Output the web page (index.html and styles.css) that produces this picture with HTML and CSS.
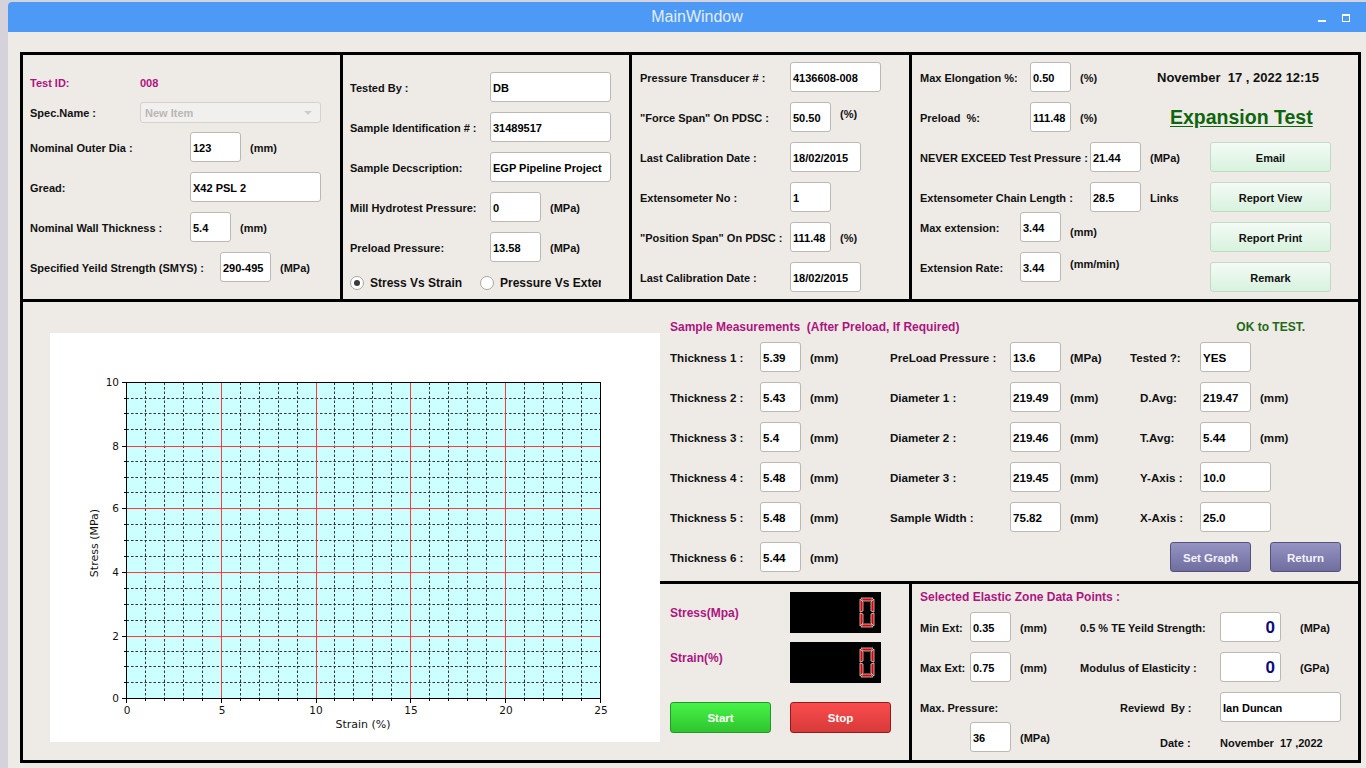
FILE: index.html
```html
<!DOCTYPE html>
<html>
<head>
<meta charset="utf-8">
<title>MainWindow</title>
<link rel="stylesheet" href="styles.css">
</head>
<body>
<div class="window">
  <div class="titlebar">
    <span class="title">MainWindow</span>
    <div class="wctl"><span class="wmin"></span><span class="wmax"></span></div>
  </div>
  <div class="content">
    <div class="frame">
      <div class="toprow">
        <!-- Panel 1 -->
        <div class="panel p1">
          <div class="form">
            <div class="row h20"><span class="lbl mag lw110">Test ID:</span><span class="lbl mag">008</span></div>
            <div class="row h20"><span class="lbl lw110">Spec.Name :</span><div class="combo"><span>New Item</span><i class="arrow"></i></div></div>
            <div class="row"><span class="lbl lw160">Nominal Outer Dia :</span><div class="inp w51">123</div><span class="unit">(mm)</span></div>
            <div class="row"><span class="lbl lw160">Gread:</span><div class="inp w131">X42 PSL 2</div></div>
            <div class="row"><span class="lbl lw160">Nominal Wall Thickness :</span><div class="inp w41">5.4</div><span class="unit">(mm)</span></div>
            <div class="row"><span class="lbl lw190">Specified Yeild Strength (SMYS) :</span><div class="inp w51">290-495</div><span class="unit">(MPa)</span></div>
          </div>
        </div>
        <!-- Panel 2 -->
        <div class="panel p2">
          <div class="form">
            <div class="row"><span class="lbl lw140">Tested By :</span><div class="inp w121">DB</div></div>
            <div class="row"><span class="lbl lw140">Sample Identification # :</span><div class="inp w121">31489517</div></div>
            <div class="row"><span class="lbl lw140">Sample Decscription:</span><div class="inp w121">EGP Pipeline Project</div></div>
            <div class="row"><span class="lbl lw140">Mill Hydrotest Pressure:</span><div class="inp w51">0</div><span class="unit">(MPa)</span></div>
            <div class="row"><span class="lbl lw140">Preload Pressure:</span><div class="inp w51">13.58</div><span class="unit">(MPa)</span></div>
            <div class="row h22">
              <div class="rgroup"><span class="radio on"></span><span class="rtxt">Stress Vs Strain</span></div>
              <div class="rgroup"><span class="radio"></span><span class="rtxt clip">Pressure Vs Extensometer</span></div>
            </div>
          </div>
        </div>
        <!-- Panel 3 -->
        <div class="panel p3">
          <div class="form">
            <div class="row"><span class="lbl lw150">Pressure Transducer # :</span><div class="inp w91">4136608-008</div></div>
            <div class="row"><span class="lbl lw150">"Force Span" On PDSC :</span><div class="inp w41">50.50</div><span class="unit up">(%)</span></div>
            <div class="row"><span class="lbl lw150">Last Calibration Date :</span><div class="inp w71">18/02/2015</div></div>
            <div class="row"><span class="lbl lw150">Extensometer No :</span><div class="inp w41">1</div></div>
            <div class="row"><span class="lbl lw150">"Position Span" On PDSC :</span><div class="inp w41">111.48</div><span class="unit">(%)</span></div>
            <div class="row"><span class="lbl lw150">Last Calibration Date :</span><div class="inp w71">18/02/2015</div></div>
          </div>
        </div>
        <!-- Panel 4 -->
        <div class="panel p4">
          <div class="p4top">
            <div class="form p4l1">
              <div class="row"><span class="lbl lw110">Max Elongation %:</span><div class="inp w41">0.50</div><span class="unit">(%)</span></div>
              <div class="row"><span class="lbl lw110">Preload  %:</span><div class="inp w41">111.48</div><span class="unit">(%)</span></div>
            </div>
            <div class="form">
              <div class="row"><span class="datetime">November  17 , 2022 12:15</span></div>
              <div class="row"><span class="exptitle">Expansion Test</span></div>
            </div>
          </div>
          <div class="p4bot">
            <div class="form p4l2">
              <div class="row"><span class="lbl lw170">NEVER EXCEED Test Pressure :</span><div class="inp w51">21.44</div><span class="unit">(MPa)</span></div>
              <div class="pair">
                <div class="row"><span class="lbl lw170">Extensometer Chain Length :</span><div class="inp w51">28.5</div><span class="unit">Links</span></div>
                <div class="row"><span class="lbl lw100">Max extension:</span><div class="inp w41">3.44</div><span class="unit down">(mm)</span></div>
              </div>
              <div class="row"><span class="lbl lw100">Extension Rate:</span><div class="inp w41">3.44</div><span class="unit up">(mm/min)</span></div>
            </div>
            <div class="form">
              <div class="gbtn">Email</div>
              <div class="gbtn">Report View</div>
              <div class="gbtn">Report Print</div>
              <div class="gbtn">Remark</div>
            </div>
          </div>
        </div>
      </div>

      <div class="bottom">
        <div class="chartpanel">
          <div class="chart">
            <svg width="610" height="409" viewBox="0 0 610 409" xmlns="http://www.w3.org/2000/svg">
              <rect x="76.5" y="49.5" width="474" height="316" fill="#ccffff"/>
              <g stroke="#333" stroke-width="1" stroke-dasharray="2.5,2" fill="none">
                <path d="M95.5 49.5V365.5M114.5 49.5V365.5M133.5 49.5V365.5M152.5 49.5V365.5M190.5 49.5V365.5M209.5 49.5V365.5M228.5 49.5V365.5M247.5 49.5V365.5M284.5 49.5V365.5M303.5 49.5V365.5M322.5 49.5V365.5M341.5 49.5V365.5M379.5 49.5V365.5M398.5 49.5V365.5M417.5 49.5V365.5M436.5 49.5V365.5M474.5 49.5V365.5M493.5 49.5V365.5M512.5 49.5V365.5M531.5 49.5V365.5"/>
                <path d="M76.5 349.5H550.5M76.5 333.5H550.5M76.5 318.5H550.5M76.5 287.5H550.5M76.5 271.5H550.5M76.5 255.5H550.5M76.5 223.5H550.5M76.5 207.5H550.5M76.5 191.5H550.5M76.5 159.5H550.5M76.5 144.5H550.5M76.5 128.5H550.5M76.5 96.5H550.5M76.5 80.5H550.5M76.5 65.5H550.5"/>
              </g>
              <rect x="76.5" y="49.5" width="474" height="316" fill="none" stroke="#000" stroke-width="1"/>
              <g stroke="#000" stroke-width="1" fill="none">
                <path d="M72 365.5H76.5M74 349.5H76.5M74 333.5H76.5M74 318.5H76.5M72 303.5H76.5M74 287.5H76.5M74 271.5H76.5M74 255.5H76.5M72 239.5H76.5M74 223.5H76.5M74 207.5H76.5M74 191.5H76.5M72 175.5H76.5M74 159.5H76.5M74 144.5H76.5M74 128.5H76.5M72 113.5H76.5M74 96.5H76.5M74 80.5H76.5M74 65.5H76.5M72 49.5H76.5"/>
                <path d="M76.5 365.5V370M95.5 365.5V368M114.5 365.5V368M133.5 365.5V368M152.5 365.5V368M171.5 365.5V370M190.5 365.5V368M209.5 365.5V368M228.5 365.5V368M247.5 365.5V368M266.5 365.5V370M284.5 365.5V368M303.5 365.5V368M322.5 365.5V368M341.5 365.5V368M360.5 365.5V370M379.5 365.5V368M398.5 365.5V368M417.5 365.5V368M436.5 365.5V368M455.5 365.5V370M474.5 365.5V368M493.5 365.5V368M512.5 365.5V368M531.5 365.5V368M550.5 365.5V370"/>
              </g>
              <g fill="#ff3c3c">
                <rect x="77" y="303" width="473" height="1"/>
                <rect x="77" y="239" width="473" height="1"/>
                <rect x="77" y="175" width="473" height="1"/>
                <rect x="77" y="113" width="473" height="1"/>
                <rect x="171" y="50" width="1" height="315"/>
                <rect x="266" y="50" width="1" height="315"/>
                <rect x="360" y="50" width="1" height="315"/>
                <rect x="455" y="50" width="1" height="315"/>
              </g>
              <g class="tick" text-anchor="end">
                <text x="69" y="369">0</text>
                <text x="69" y="307">2</text>
                <text x="69" y="243">4</text>
                <text x="69" y="179">6</text>
                <text x="69" y="117">8</text>
                <text x="69" y="53">10</text>
              </g>
              <g class="tick" text-anchor="middle">
                <text x="77" y="381">0</text>
                <text x="172" y="381">5</text>
                <text x="266" y="381">10</text>
                <text x="361" y="381">15</text>
                <text x="456" y="381">20</text>
                <text x="551" y="381">25</text>
              </g>
              <text class="axt" x="313" y="395" text-anchor="middle">Strain (%)</text>
              <text class="axt" x="0" y="0" text-anchor="middle" transform="translate(48 210) rotate(-90)">Stress (MPa)</text>
            </svg>
          </div>
        </div>

        <div class="rightcol">
          <div class="meas">
            <div class="mhead"><span class="hmag">Sample Measurements  (After Preload, If Required)</span><span class="okt">OK to TEST.</span></div>
            <div class="mgrid">
              <div class="row"><span class="lbl lw90">Thickness 1 :</span><div class="inp w41">5.39</div><span class="unit">(mm)</span></div>
              <div class="row"><span class="lbl lw120">PreLoad Pressure :</span><div class="inp w51">13.6</div><span class="unit">(MPa)</span></div>
              <div class="row"><span class="lbl lw70">Tested ?:</span><div class="inp w51">YES</div></div>

              <div class="row"><span class="lbl lw90">Thickness 2 :</span><div class="inp w41">5.43</div><span class="unit">(mm)</span></div>
              <div class="row"><span class="lbl lw120">Diameter 1 :</span><div class="inp w51">219.49</div><span class="unit">(mm)</span></div>
              <div class="row cc"><span class="lbl lw60">D.Avg:</span><div class="inp w51">219.47</div><span class="unit">(mm)</span></div>

              <div class="row"><span class="lbl lw90">Thickness 3 :</span><div class="inp w41">5.4</div><span class="unit">(mm)</span></div>
              <div class="row"><span class="lbl lw120">Diameter 2 :</span><div class="inp w51">219.46</div><span class="unit">(mm)</span></div>
              <div class="row cc"><span class="lbl lw60">T.Avg:</span><div class="inp w51">5.44</div><span class="unit">(mm)</span></div>

              <div class="row"><span class="lbl lw90">Thickness 4 :</span><div class="inp w41">5.48</div><span class="unit">(mm)</span></div>
              <div class="row"><span class="lbl lw120">Diameter 3 :</span><div class="inp w51">219.45</div><span class="unit">(mm)</span></div>
              <div class="row cc"><span class="lbl lw60">Y-Axis :</span><div class="inp w71">10.0</div></div>

              <div class="row"><span class="lbl lw90">Thickness 5 :</span><div class="inp w41">5.48</div><span class="unit">(mm)</span></div>
              <div class="row"><span class="lbl lw120">Sample Width :</span><div class="inp w51">75.82</div><span class="unit">(mm)</span></div>
              <div class="row cc"><span class="lbl lw60">X-Axis :</span><div class="inp w71">25.0</div></div>

              <div class="row"><span class="lbl lw90">Thickness 6 :</span><div class="inp w41">5.44</div><span class="unit">(mm)</span></div>
              <div class="row"></div>
              <div class="row btns"><div class="pbtn w81">Set Graph</div><div class="pbtn w71 ml19">Return</div></div>
            </div>
          </div>

          <div class="lower">
            <div class="lcdpanel">
              <div class="lrow"><span class="lmag lw120">Stress(Mpa)</span>
                <div class="lcd"><svg width="91" height="41" viewBox="0 0 91 41"><g fill="#e00000" stroke="#d8d8d8" stroke-width="0.8"><polygon points="71,6 83,6 81,9 73,9"/><polygon points="70,7 73,10 73,19 70,20"/><polygon points="84,7 84,20 81,19 81,10"/><polygon points="70,21 73,22 73,31 70,34"/><polygon points="84,21 84,34 81,31 81,22"/><polygon points="73,32 81,32 83,35 71,35"/></g></svg></div>
              </div>
              <div class="lrow second"><span class="lmag lw120 hi">Strain(%)</span>
                <div class="lcd"><svg width="91" height="41" viewBox="0 0 91 41"><g fill="#e00000" stroke="#d8d8d8" stroke-width="0.8"><polygon points="71,6 83,6 81,9 73,9"/><polygon points="70,7 73,10 73,19 70,20"/><polygon points="84,7 84,20 81,19 81,10"/><polygon points="70,21 73,22 73,31 70,34"/><polygon points="84,21 84,34 81,31 81,22"/><polygon points="73,32 81,32 83,35 71,35"/></g></svg></div>
              </div>
              <div class="lrow third"><div class="sbtn start">Start</div><div class="sbtn stop">Stop</div></div>
            </div>
            <div class="brpanel">
              <div class="hmag">Selected Elastic Zone Data Points :</div>
              <div class="brrows">
                <div class="row"><div class="brc1"><span class="lbl lw50">Min Ext:</span><div class="inp w41">0.35</div><span class="unit">(mm)</span></div><span class="lbl lw140">0.5 % TE Yeild Strength:</span><div class="inp w61 big">0</div><span class="unit ml19">(MPa)</span></div>
                <div class="row mt10"><div class="brc1"><span class="lbl lw50">Max Ext:</span><div class="inp w41">0.75</div><span class="unit">(mm)</span></div><span class="lbl lw140">Modulus of Elasticity :</span><div class="inp w61 big">0</div><span class="unit ml19">(GPa)</span></div>
                <div class="row mt10"><span class="lbl lw200">Max. Pressure:</span><span class="lbl lw100">Reviewd  By :</span><div class="inp w121">Ian Duncan</div></div>
                <div class="row"><div class="brc1d"><div class="inp w41">36</div><span class="unit">(MPa)</span></div><span class="lbl lw60 low">Date :</span><span class="lbl low">November  17 ,2022</span></div>
              </div>
            </div>
          </div>
        </div>
      </div>
    </div>
  </div>
</div>
</body>
</html>
```

FILE: styles.css
```css
* { box-sizing: border-box; }
html, body { margin: 0; padding: 0; }
body {
  width: 1366px;
  height: 768px;
  overflow: hidden;
  background: #d6d2dc;
  font-family: "Liberation Sans", Arial, sans-serif;
  color: #111;
}
.window {
  margin: 2px 0 0 8px;
  width: 1358px;
  height: 766px;
  background: #eeebe7;
  border-top-left-radius: 4px;
  overflow: hidden;
}
.titlebar {
  height: 30px;
  background: #4c9af5;
  display: flex;
  align-items: center;
  padding-left: 70px;
}
.title {
  flex: 1;
  text-align: center;
  color: #e4edfb;
  font-size: 16px;
}
.wctl {
  width: 50px;
  height: 30px;
  display: flex;
  align-items: flex-start;
}
.wmin {
  margin: 18px 0 0 2px;
  width: 8px;
  height: 2px;
  background: #fff;
}
.wmax {
  margin: 12px 0 0 16px;
  width: 8px;
  height: 8px;
  border: 1px solid #fff;
  border-top-width: 2px;
}
.content { padding: 20px 0 0 12px; }
.frame { width: 1341px; }
.toprow {
  display: grid;
  grid-template-columns: 317px 286px 277px 446px;
  column-gap: 3px;
  padding: 3px;
  background: #000;
  height: 250px;
}
.panel { background: #eeebe7; }
.p1 { padding: 17px 0 0 7px; }
.p2 { padding: 17px 0 0 7px; }
.p3 { padding: 7px 0 0 8px; }
.p4 { padding: 7px 0 0 8px; }

.form { display: flex; flex-direction: column; gap: 10px; }
.row { display: flex; align-items: center; height: 30px; flex-shrink: 0; }
.row.h20 { height: 20px; }
.row.h22 { height: 22px; }
.lbl {
  font-weight: bold;
  font-size: 11px;
  line-height: 13px;
  white-space: pre;
  flex-shrink: 0;
}
.toprow .lbl, .toprow .unit, .brpanel .lbl, .brpanel .unit { padding-top: 2px; }
.toprow .inp, .brpanel .inp { padding-top: 2px; }
.mag { color: #ad1480; }
.lw50 { width: 50px; }
.lw60 { width: 60px; }
.lw70 { width: 70px; }
.lw90 { width: 90px; }
.lw100 { width: 100px; }
.lw110 { width: 110px; }
.lw120 { width: 120px; }
.lw140 { width: 140px; }
.lw150 { width: 150px; }
.lw160 { width: 160px; }
.lw170 { width: 170px; }
.lw190 { width: 190px; }
.lw200 { width: 200px; }

.inp {
  height: 30px;
  flex-shrink: 0;
  background: #fff;
  border: 1px solid #bbb8b5;
  border-radius: 3px;
  font-weight: bold;
  font-size: 11px;
  color: #000;
  padding-left: 2px;
  display: flex;
  align-items: center;
  white-space: nowrap;
  overflow: hidden;
}
.w41 { width: 41px; }
.w51 { width: 51px; }
.w61 { width: 61px; }
.w71 { width: 71px; }
.w81 { width: 81px; }
.w91 { width: 91px; }
.w121 { width: 121px; }
.w131 { width: 131px; }
.unit {
  margin-left: 9px;
  font-weight: bold;
  font-size: 11px;
  line-height: 13px;
  white-space: nowrap;
}
.unit.up { align-self: flex-start; margin-top: 4px; }
.unit.down { align-self: flex-end; margin-bottom: 3px; }
.ml19 { margin-left: 19px; }
.mt10 { margin-top: 10px; }

.combo {
  width: 181px;
  height: 21px;
  background: #f2f0ee;
  border: 1px solid #d4d1ce;
  border-radius: 3px;
  display: flex;
  align-items: center;
  justify-content: space-between;
  padding: 1px 8px 0 4px;
  font-weight: bold;
  font-size: 11px;
  color: #b9b7b5;
}
.combo .arrow {
  width: 0;
  height: 0;
  border-left: 4px solid transparent;
  border-right: 4px solid transparent;
  border-top: 4px solid #cfcdcb;
}

.rgroup { display: flex; align-items: center; width: 130px; }
.radio {
  width: 14px;
  height: 14px;
  border-radius: 50%;
  border: 1px solid #a9a6a3;
  background: #fff;
  display: flex;
  align-items: center;
  justify-content: center;
  flex-shrink: 0;
}
.radio.on::after {
  content: "";
  width: 6px;
  height: 6px;
  border-radius: 50%;
  background: #3a3a3a;
}
.rtxt {
  margin-left: 6px;
  font-weight: bold;
  font-size: 12px;
  white-space: nowrap;
}
.rtxt.clip { width: 101px; overflow: hidden; }

.p4top { display: flex; }
.p4l1 { width: 237px; }
.datetime {
  font-weight: bold;
  font-size: 13px;
  white-space: pre;
  color: #111;
}
.exptitle {
  margin-left: 13px;
  font-weight: bold;
  font-size: 19.5px;
  color: #0d650d;
  text-decoration: underline;
  text-underline-offset: 2px;
}
.p4bot { display: flex; margin-top: 10px; }
.p4l2 { width: 290px; }
.pair { display: flex; flex-direction: column; }
.gbtn {
  width: 121px;
  height: 30px;
  border: 1px solid #c0dac6;
  border-radius: 3px;
  background: linear-gradient(#f3fbf5, #d8f2de);
  display: flex;
  align-items: center;
  justify-content: center;
  padding-top: 2px;
  font-weight: bold;
  font-size: 11px;
}

.bottom {
  display: grid;
  grid-template-columns: 637px 698px;
  border: 3px solid #000;
  border-top: 0;
  height: 461px;
}
.chartpanel { padding: 31px 0 0 27px; }
.chart { width: 610px; height: 409px; background: #fff; }
.chart svg { display: block; }
.tick { font-family: "DejaVu Sans", sans-serif; font-size: 10.5px; fill: #111; }
.axt { font-family: "DejaVu Sans", sans-serif; font-size: 11px; fill: #111; }

.rightcol { display: flex; flex-direction: column; }
.meas { height: 279px; padding: 18px 0 0 10px; }
.mhead {
  display: flex;
  justify-content: space-between;
  width: 635px;
  height: 14px;
  line-height: 14px;
}
.hmag {
  font-weight: bold;
  font-size: 12px;
  line-height: 14px;
  color: #ad1480;
  white-space: pre;
}
.okt { font-weight: bold; font-size: 12px; color: #1f6a16; }
.mgrid {
  margin-top: 8px;
  display: grid;
  grid-template-columns: 220px 240px 230px;
  grid-auto-rows: 30px;
  row-gap: 10px;
}
.meas .lbl, .meas .inp, .meas .unit { font-size: 11.6px; }
.meas .inp { padding-top: 1px; }
.row.cc { padding-left: 10px; }
.row.btns { padding-left: 40px; }
.pbtn {
  height: 30px;
  border: 1px solid #55537e;
  border-radius: 3px;
  background: linear-gradient(#9593c2, #706e9f);
  color: #f2f2fa;
  display: flex;
  align-items: center;
  justify-content: center;
  padding-top: 2px;
  font-weight: bold;
  font-size: 11.5px;
}

.lower {
  flex: 1;
  border-top: 3px solid #000;
  display: flex;
}
.lcdpanel {
  width: 252px;
  border-right: 3px solid #000;
  padding: 8px 0 0 10px;
}
.lrow { display: flex; align-items: center; }
.lrow.second { margin-top: 9px; }
.lrow.third { margin-top: 19px; }
.lmag {
  font-weight: bold;
  font-size: 12px;
  line-height: 14px;
  color: #ad1480;
}
.lmag.hi { align-self: flex-start; margin-top: 9px; }
.lcd { width: 91px; height: 41px; background: #000; }
.lcd svg { display: block; }
.sbtn {
  width: 101px;
  height: 31px;
  border-radius: 3px;
  display: flex;
  align-items: center;
  justify-content: center;
  font-weight: bold;
  font-size: 11.5px;
  color: #fff;
}
.start {
  background: linear-gradient(#47f347, #2ec52e);
  border: 1px solid #23952a;
}
.stop {
  margin-left: 19px;
  background: linear-gradient(#fa4c4c, #d83a3a);
  border: 1px solid #8f1c1c;
}
.brpanel { flex: 1; padding: 6px 0 0 8px; }
.brrows { margin-top: 8px; display: flex; flex-direction: column; }
.brc1 { display: flex; align-items: center; width: 160px; }
.brc1d { display: flex; align-items: center; width: 240px; padding-left: 50px; }
.big {
  justify-content: flex-end;
  padding-right: 5px;
  font-size: 17px;
  color: #0a0a84;
}
.lbl.low { align-self: flex-end; margin-bottom: 2px; }
```
